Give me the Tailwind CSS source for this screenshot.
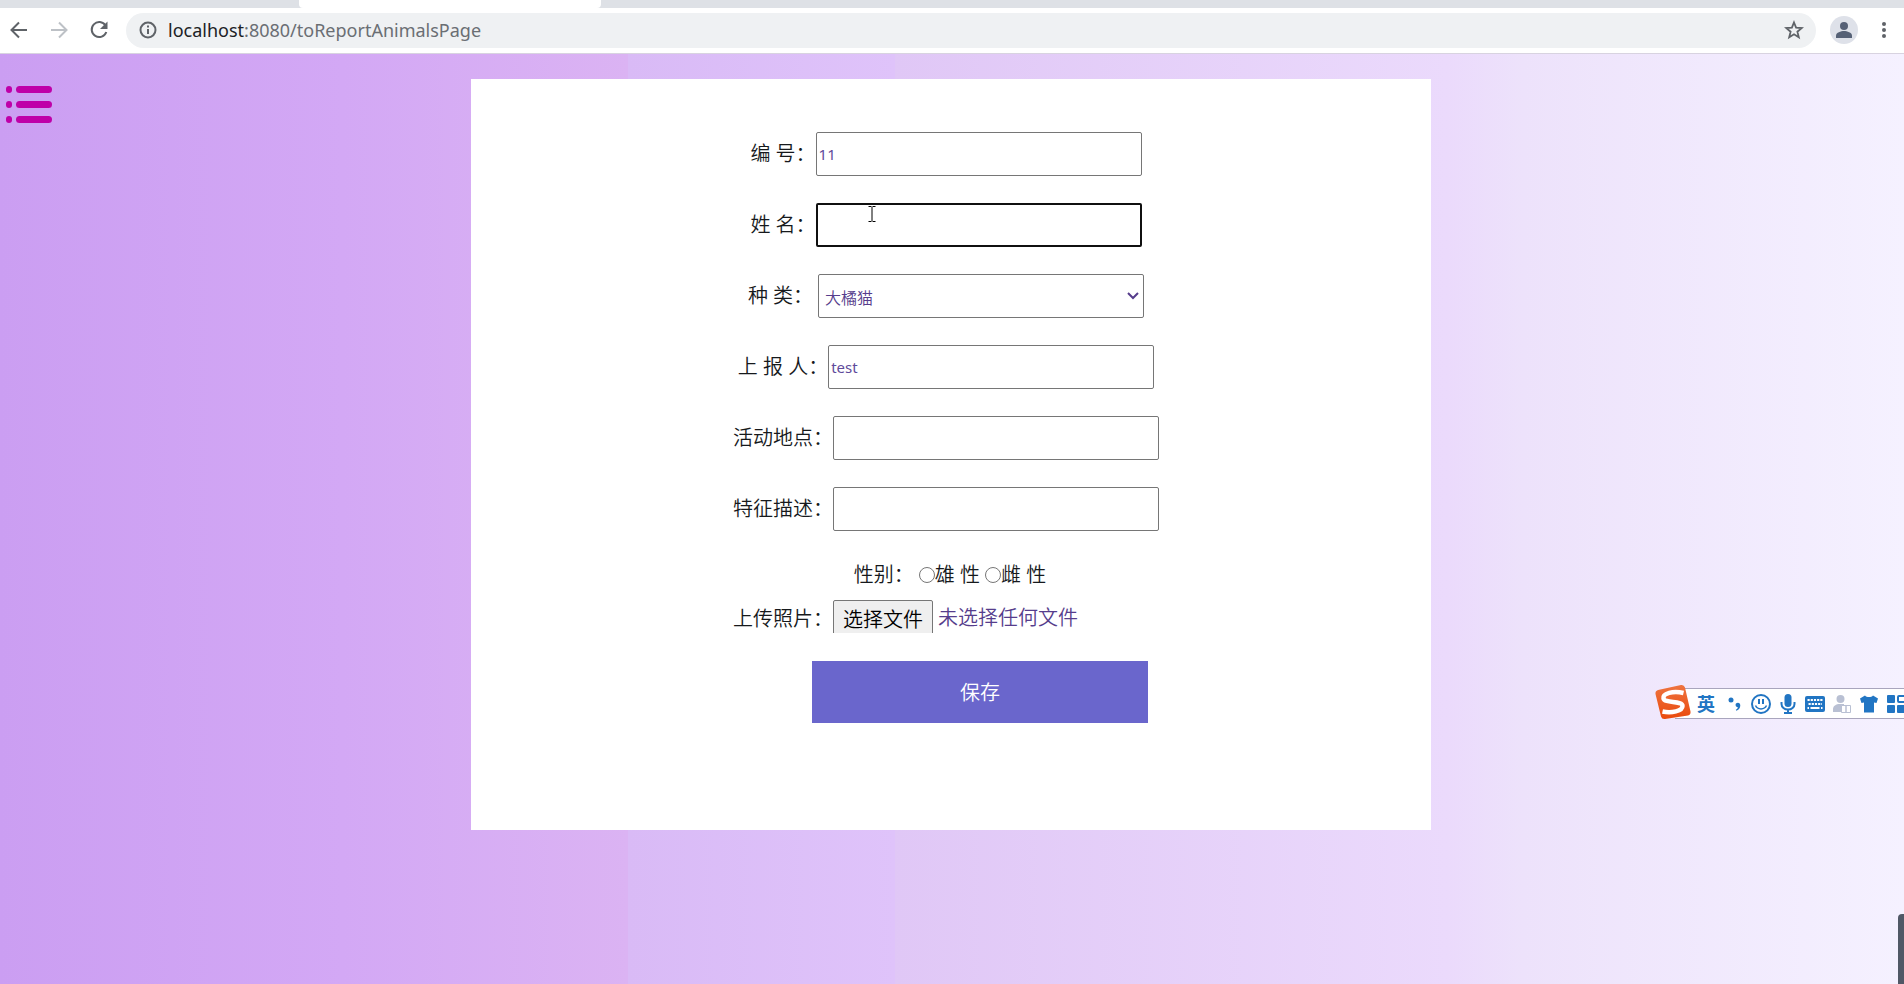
<!DOCTYPE html>
<html lang="zh-CN">
<head>
  <meta charset="UTF-8">
  <meta name="viewport" content="width=device-width, initial-scale=1.0">
  <title>上报动物</title>
  <script src="https://cdn.jsdelivr.net/npm/@tailwindcss/browser@4"></script>
</head>
<body class="min-h-screen flex flex-col overflow-x-hidden bg-white font-['Noto_Sans','Noto_Sans_CJK_SC',sans-serif] text-[#16191c]">

  <!-- Browser bar -->
  <header class="border-b border-[#d8d3e0]">
    <div class="flex h-2 bg-[#dee1e6]">
      <div class="w-[302px] ml-[299px] bg-white rounded-b-sm"></div>
    </div>
    <div class="flex items-center h-[45px] pl-[9px] pr-[10px] pb-px">
      <button aria-label="后退" class="w-5 h-5 text-[#5f6368]">
        <svg viewBox="0 0 20 20" fill="none" stroke="currentColor" stroke-width="2"><path d="M18 10H3M10 2.500 2.500 10l7.500 7.500"/></svg>
      </button>
      <button aria-label="前进" class="w-5 h-5 ml-5 text-[#bdc1c6]">
        <svg viewBox="0 0 20 20" fill="none" stroke="currentColor" stroke-width="2"><path d="M2 10h15M10 2.500 17.500 10 10 17.500"/></svg>
      </button>
      <button aria-label="刷新" class="w-5 h-5 ml-5 text-[#5f6368]">
        <svg viewBox="0 0 20 20" fill="none" stroke="currentColor" stroke-width="2"><path d="M16.500 5.500A7.500 7.500 0 1 0 17.300 12"/><path d="M18.500 1.500v7.500H11z" fill="currentColor" stroke="none"/></svg>
      </button>
      <div class="flex flex-1 items-center h-[35px] ml-[17px] px-3 rounded-full bg-[#eff1f3]">
        <svg class="w-5 h-5" viewBox="0 0 20 20" fill="none" stroke="#5f6368" stroke-width="2"><circle cx="10" cy="10" r="7.500"/><path d="M10 9v5M10 5.500v2"/></svg>
        <p class="flex-1 ml-[10px] text-[18px] leading-6 text-[#6a6e73]"><span class="text-[#202124]">localhost</span>:8080/toReportAnimalsPage</p>
        <button aria-label="收藏" class="w-5 h-5">
          <svg viewBox="0 0 20 20" fill="none" stroke="#5f6368" stroke-width="1.800"><path d="m10 2.500 2.100 5.200 5.600.4-4.300 3.600 1.400 5.500-4.800-3-4.800 3 1.400-5.500-4.300-3.600 5.600-.4z"/></svg>
        </button>
      </div>
      <button aria-label="用户" class="w-7 h-7 ml-[14px]">
        <svg viewBox="0 0 28 28"><circle cx="14" cy="14" r="14" fill="#dee1e9"/><circle cx="14" cy="10" r="4" fill="#566176"/><path d="M6 22v-2.500c0-3 5-4.500 8-4.500s8 1.500 8 4.500V22z" fill="#566176"/></svg>
      </button>
      <button aria-label="菜单" class="w-5 h-5 ml-4">
        <svg viewBox="0 0 20 20" fill="#5f6368"><circle cx="10" cy="4" r="2"/><circle cx="10" cy="10" r="2"/><circle cx="10" cy="16" r="2"/></svg>
      </button>
    </div>
  </header>

  <main class="relative flex-1 pl-16 pr-[66px] py-[25px] bg-[linear-gradient(to_right,#cb9ef2_0%,#d3a8f5_18%,#dbb3f3_33%,#d9baf6_33%,#dfc3fa_47%,#e0c7f6_47%,#ebdafc_76%,#ede2fb_80%,#f5f1ff_100%)]">
    <button aria-label="导航" class="absolute left-[6px] top-[31px] w-[46px] h-[38px]">
      <svg viewBox="0 0 46 38" fill="#bf00a8"><rect x="0" y="1" width="6" height="7" rx="3"/><rect x="10" y="1" width="36" height="7" rx="3.500"/><rect x="0" y="16" width="6" height="7" rx="3"/><rect x="10" y="16" width="36" height="7" rx="3.500"/><rect x="0" y="31" width="6" height="7" rx="3"/><rect x="10" y="31" width="36" height="7" rx="3.500"/></svg>
    </button>

    <form class="w-full max-w-[960px] mx-auto pt-[53px] pb-[107px] bg-white text-[20px] font-[350] leading-[30px]" onsubmit="return false">
      <div class="flex flex-col gap-[27px] pr-[10px]">
        <div class="flex items-center justify-center">
          <label for="id">编 号：</label>
          <input id="id" type="text" value="11" class="w-[326px] h-[44px] px-[2px] border border-[#767676] rounded-xs text-[15px] font-normal text-[#5f4b9b] outline-none">
        </div>
        <div class="flex items-center justify-center">
          <label for="name">姓 名：</label>
          <input id="name" type="text" autofocus class="w-[326px] h-[44px] px-px border-2 border-[#101010] rounded-xs text-[15px] font-normal text-[#5f4b9b] outline-none">
        </div>
        <div class="flex items-center justify-center">
          <label for="kind" class="mr-[5px]">种 类：</label>
          <div class="relative">
            <select id="kind" class="block appearance-none w-[326px] h-[44px] px-[6px] pt-[3px] border border-[#767676] rounded-xs text-[16px] text-[#563d8c] outline-none">
              <option>大橘猫</option>
            </select>
            <svg class="absolute right-[5px] top-4 w-3 h-3 pointer-events-none" viewBox="0 0 12 12" fill="none" stroke="#563d8c" stroke-width="2"><path d="m1 3 5 5 5-5"/></svg>
          </div>
        </div>
        <div class="flex items-center justify-center">
          <label for="reporter">上 报 人：</label>
          <input id="reporter" type="text" value="test" class="w-[326px] h-[44px] px-[2px] border border-[#767676] rounded-xs text-[15px] font-normal text-[#5f4b9b] outline-none">
        </div>
        <div class="flex items-center justify-center">
          <label for="place">活动地点：</label>
          <input id="place" type="text" class="w-[326px] h-[44px] px-[2px] border border-[#767676] rounded-xs text-[15px] font-normal text-[#5f4b9b] outline-none">
        </div>
        <div class="flex items-center justify-center">
          <label for="feature">特征描述：</label>
          <input id="feature" type="text" class="w-[326px] h-[44px] px-[2px] border border-[#767676] rounded-xs text-[15px] font-normal text-[#5f4b9b] outline-none">
        </div>
      </div>

      <div role="radiogroup" aria-labelledby="sex" class="flex items-center justify-center mt-[29px] pr-[2px]">
        <span id="sex" class="mr-[5px]">性别：</span>
        <input id="male" type="radio" name="sex" class="w-4 h-4"><label for="male" class="mr-[5px]">雄 性</label>
        <input id="female" type="radio" name="sex" class="w-4 h-4"><label for="female">雌 性</label>
      </div>

      <div class="flex justify-center mt-[10px] pr-[10px]">
        <label for="photo" class="pt-1">上传照片：</label>
        <div class="flex w-[326px] h-[33px] overflow-hidden">
          <input id="photo" type="file" class="hidden">
          <button type="button" onclick="document.getElementById('photo').click()" class="h-[40px] px-[9px] border border-[#767676] rounded-xs bg-[#efefef] text-black">选择文件</button>
          <span class="ml-[5px] pt-1 leading-7 text-[#563d8c]">未选择任何文件</span>
        </div>
      </div>

      <div class="flex justify-center mt-[27px] pl-[60px] pr-[2px]">
        <button type="submit" class="w-[336px] h-[62px] pt-[2px] bg-[#6a66cc] text-white">保存</button>
      </div>
    </form>
  </main>

  <!-- Text cursor -->
  <svg class="absolute left-[868px] top-[206px] w-2 h-4 pointer-events-none" viewBox="0 0 8 16" fill="none" stroke="#000"><path d="M.5.5h3M4.500.5h3M.5 15.500h3M4.500 15.500h3M4 1v14"/></svg>

  <!-- Input method bar -->
  <aside class="absolute right-0 top-[684px] flex items-center w-[249px] h-9 overflow-hidden">
    <div class="absolute left-[20px] right-0 top-1 h-[31px] bg-white border-y border-[#a9a5bd]"></div>
    <svg class="relative w-9 h-9 shrink-0" viewBox="0 0 36 36">
      <defs><linearGradient id="logo" x1="0" y1="0" x2="0" y2="1"><stop offset="0" stop-color="#ee7440"/><stop offset="1" stop-color="#ea4a0d"/></linearGradient></defs>
      <path d="M3 6 26 1q3-.5 4 2.500l5.500 24q.5 3-2.500 4L10 35q-3 .5-4-2.500L.5 10Q0 7 3 6z" fill="url(#logo)"/>
      <path d="M28.500 9C18 6.500 7.500 9.500 8.500 14.500c1 5 19 2 19 7.500 0 5-11 7.500-20 5.500" fill="none" stroke="#fff" stroke-width="4.500"/>
    </svg>
    <div class="relative flex items-center gap-[7px] ml-[6px] pt-[3px] text-[#2175c3]">
      <span class="w-5 text-[18px] leading-5 font-bold">英</span>
      <svg class="w-5 h-5 shrink-0" viewBox="0 0 20 20" fill="currentColor"><circle cx="7" cy="6" r="2.500"/><path d="M12 9.500c2-1.500 4.500-.5 4.300 2.200-.2 2.500-1.800 4.300-4 5l-.5-1c1.200-.6 1.900-1.500 2-2.500-1.800 0-2.800-2.200-1.800-3.700z"/></svg>
      <svg class="w-5 h-5 shrink-0" viewBox="0 0 20 20" fill="none" stroke="currentColor" stroke-width="2"><circle cx="10" cy="10" r="9"/><path d="M8 5v5M12 5v5"/><path d="M4.500 11.500c2 4.500 9 4.500 11 0" stroke-width="1.500"/></svg>
      <svg class="w-5 h-5 shrink-0" viewBox="0 0 20 20" fill="none" stroke="currentColor" stroke-width="2"><rect x="6.500" y="0" width="7" height="13" rx="3.500" fill="currentColor" stroke="none"/><path d="M3.500 8v2a6.500 5.500 0 0 0 13 0V8M10 15.500V19M6 19h8"/></svg>
      <svg class="w-5 h-5 shrink-0" viewBox="0 0 20 20"><rect x="0" y="2" width="20" height="16" rx="2" fill="currentColor"/><path d="M2.500 6h15M3.500 10h13.500" stroke="#fff" stroke-width="2" stroke-dasharray="2.200 1"/><path d="M2.500 14H4M5.500 14h9M16 14h1.500" stroke="#fff" stroke-width="2"/></svg>
      <svg class="w-5 h-5 shrink-0" viewBox="0 0 20 20" fill="#b9c0d3"><circle cx="8.500" cy="5" r="4"/><path d="M1 18v-3c0-3 3-5 7-5h4v8z"/><path d="M9.500 11.500h4.500V18.500H9.500zM14 11.500h4.500V18.500H14z" fill="#fff" stroke="#b9c0d3"/></svg>
      <svg class="w-5 h-5 shrink-0" viewBox="0 0 20 20" fill="currentColor"><path d="M6 1.500c1.500 2 6.500 2 8 0l5 3-1.500 4.500-2.500-.5V18.500H5V8.500L2.500 9 1 4.500z"/></svg>
      <svg class="w-5 h-5 shrink-0" viewBox="0 0 20 20" fill="currentColor"><rect x="1" y="1" width="8" height="8" rx="1"/><rect x="12" y="2" width="7" height="6" rx="1" fill="none" stroke="currentColor" stroke-width="2"/><rect x="1" y="11" width="8" height="8" rx="1"/><rect x="11" y="11" width="9" height="8" rx="1"/></svg>
    </div>
  </aside>

  <div class="absolute right-0 bottom-0 w-[6px] h-[70px] rounded-tl bg-[#505866]"></div>
</body>
</html>
